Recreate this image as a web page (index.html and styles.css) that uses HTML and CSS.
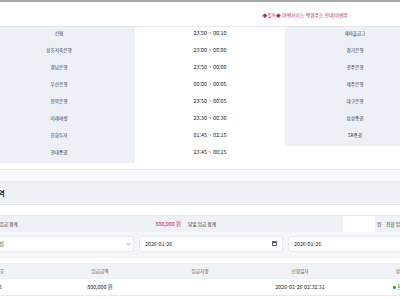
FILE: index.html
```html
<!DOCTYPE html>
<html lang="ko">

<head>
  <meta charset="UTF-8">
  <meta name="viewport" content="width=device-width, initial-scale=1.0">
  <title>입금내역</title>
  <link rel="stylesheet" href="styles.css">
</head>

<body>
  <div class="topbar">
    <p class="notice">◆필독◆ 아벤카지노 평생주소 안내|아벤주</p>
  </div>

  <!-- 은행 점검 시간 -->
  <table class="bank-times">
    <colgroup>
      <col class="col-label">
      <col class="col-time">
      <col class="col-label-r">
    </colgroup>
    <tr><th>신협</th><td>23:50 ~ 00:10</td><th>새마을금고</th></tr>
    <tr><th>상호저축은행</th><td>23:00 ~ 08:00</td><th>경기은행</th></tr>
    <tr><th>경남은행</th><td>23:50 ~ 00:00</td><th>광주은행</th></tr>
    <tr><th>부산은행</th><td>00:00 ~ 00:05</td><th>제주은행</th></tr>
    <tr><th>전북은행</th><td>23:50 ~ 00:05</td><th>대구은행</th></tr>
    <tr><th>미래에셋</th><td>23:30 ~ 00:30</td><th>삼성증권</th></tr>
    <tr><th>한화투자</th><td>01:45 ~ 02:15</td><th>SK증권</th></tr>
    <tr><th>현대증권</th><td>23:45 ~ 00:15</td><th class="empty"></th></tr>
  </table>

  <section class="deposit">
    <div class="deposit-band"></div>
    <div class="deposit-head">
      <h2>입금내역</h2>
    </div>
    <div class="deposit-body">
      <div class="summary">
        <span class="sum-label first">총 입금 합계</span>
        <span class="sum-value">800,000 원</span>
        <span class="sum-label">당일 입금 합계</span>
        <span class="sum-box"></span>
        <span class="sum-unit">원</span>
        <span class="sum-label last">전월 입금 합계</span>
      </div>

      <div class="filters">
        <div class="field select">
          <span>전체 지점</span>
          <svg width="5" height="4" viewBox="0 0 5 4"><polyline points="0.5,1 2.5,3 4.5,1" fill="none" stroke="#777" stroke-width="0.7"/></svg>
        </div>
        <div class="field date">
          <span>2026-01-26</span>
          <svg width="5" height="5" viewBox="0 0 5 5"><rect x="0.5" y="0.8" width="4" height="3.7" fill="none" stroke="#222" stroke-width="0.7"/><rect x="0.5" y="0.8" width="4" height="1" fill="#222"/></svg>
        </div>
        <div class="field date">
          <span>2026-01-26</span>
        </div>
      </div>

      <table class="history">
        <thead>
          <tr><th>번호</th><th>입금금액</th><th>입금자명</th><th>신청일자</th><th>상태</th></tr>
        </thead>
        <tbody>
          <tr>
            <td>8</td>
            <td>800,000 원</td>
            <td></td>
            <td>2026-01-26 02:32:31</td>
            <td class="status"><i class="dot"></i>완료</td>
          </tr>
        </tbody>
      </table>
    </div>
  </section>
</body>

</html>
```

FILE: styles.css
```css
* {
  margin: 0;
  padding: 0;
  box-sizing: border-box;
}

body {
  width: 400px;
  overflow: hidden;
  background: #fff;
  color: #333;
  font-family: "Noto Sans CJK KR", "Noto Sans", sans-serif;
  font-size: 4.6px;
}

.topbar {
  height: 26px;
  border-top: 2px solid #a9a9a9;
  display: flex;
  align-items: center;
  justify-content: flex-end;
  padding-right: 52px;
}

.notice {
  color: #c4195e;
  font-size: 4.8px;
}

/* bank times */
.bank-times {
  margin-left: -17px;
  width: 442px;
  table-layout: fixed;
  border-collapse: collapse;
  border-top: 1px solid #e2e7f0;
}

.bank-times .col-label {
  width: 152px;
}

.bank-times .col-time {
  width: 150px;
}

.bank-times .col-label-r {
  width: 140px;
}

.bank-times tr {
  height: 17px;
}

.bank-times th,
.bank-times td {
  padding-bottom: 4px;
}

.bank-times th {
  background: #edf1f7;
  font-weight: normal;
  text-align: center;
}

.bank-times th.empty {
  background: none;
}

.bank-times td {
  text-align: center;
  font-size: 5.4px;
  color: #222;
}

/* deposit */
.deposit {
  margin-top: 6px;
  border-top: 1px solid #e5e9f0;
}

.deposit-band {
  height: 12px;
  background: #f7f9fc;
  border-bottom: 1px solid #e3e8f0;
}

.deposit-head {
  height: 23px;
  background: #eef1f6;
  border-bottom: 1px solid #e1e6ee;
  display: flex;
  align-items: center;
}

.deposit-head h2 {
  font-size: 7px;
  font-weight: bold;
  color: #222;
  margin-left: -21px;
}

.deposit-body {
  padding-top: 10px;
}

.summary {
  height: 17px;
  display: flex;
  align-items: center;
  background: #eef1f6;
  border-top: 1px solid #e3e8f0;
  margin-left: -6px;
}

.summary > span {
  flex-shrink: 0;
}

.sum-label {
  margin-left: 7px;
  width: 155px;
  color: #333;
}

.sum-label.first {
  margin-left: 0;
  width: 130px;
}

.sum-label.last {
  margin-left: 0;
  width: 60px;
}

.sum-value {
  width: 57px;
  text-align: right;
  color: #c4195e;
  font-size: 5.3px;
}

.sum-box {
  align-self: stretch;
  width: 32px;
  background: #fff;
}

.sum-unit {
  padding-left: 2px;
  width: 11px;
}

.filters {
  display: flex;
  gap: 5px;
  padding: 4px 0 6px;
  margin-left: -24px;
  background: #f3f5f9;
}

.field {
  flex-shrink: 0;
  height: 16px;
  background: #fff;
  border: 1px solid #e6eaf1;
  border-radius: 3px;
  display: flex;
  align-items: center;
  justify-content: space-between;
  padding: 0 5px;
  font-size: 5.3px;
  color: #222;
}

.field.select {
  width: 158px;
  padding-left: 6px;
  padding-right: 2px;
  color: #444;
}

.field.date {
  width: 144px;
}

.history {
  margin-top: 5px;
  margin-left: -50px;
  width: 500px;
  table-layout: fixed;
  border-collapse: collapse;
}

.history th {
  height: 16px;
  background: #eff2f6;
  font-weight: normal;
  color: #555;
}

.history td {
  height: 17px;
  text-align: center;
  border-bottom: 1px solid #e5e9ef;
  font-size: 5.3px;
  color: #222;
}

.history .status {
  color: #2c9a3c;
}

.dot {
  display: inline-block;
  width: 2.5px;
  height: 2.5px;
  border-radius: 50%;
  background: #2c9a3c;
  margin-right: 1.5px;
  vertical-align: middle;
}
```
